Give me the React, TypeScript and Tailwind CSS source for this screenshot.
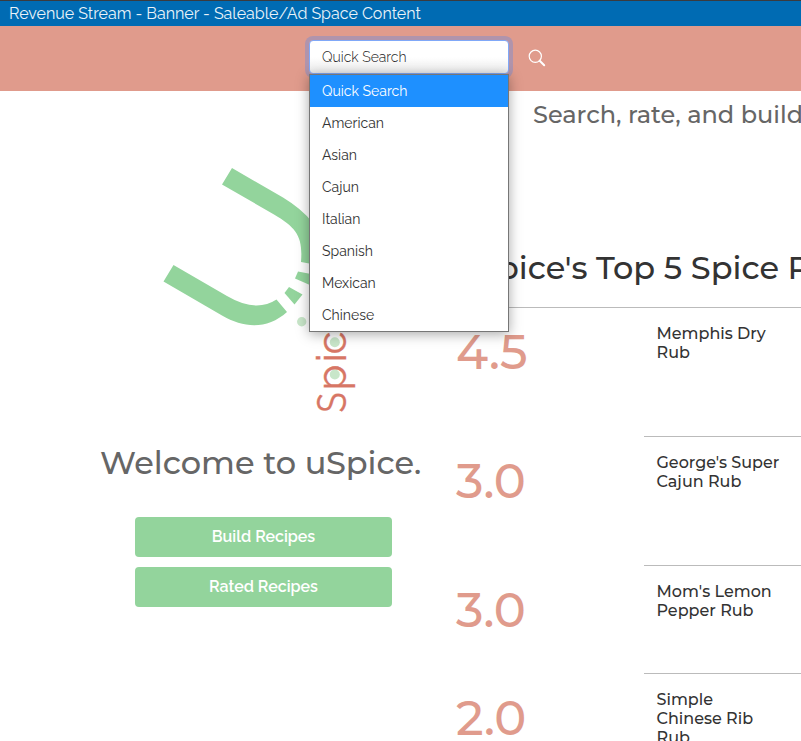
const cuisines = ["Quick Search", "American", "Asian", "Cajun", "Italian", "Spanish", "Mexican", "Chinese"];

const heading = "font-['Montserrat','Inter',sans-serif] font-medium";

const rubs = [
  { score: "4.5", lines: ["Memphis Dry", "Rub"], height: "h-[129px]" },
  { score: "3.0", lines: ["George's Super", "Cajun Rub"], height: "h-[129px]" },
  { score: "3.0", lines: ["Mom's Lemon", "Pepper Rub"], height: "h-[108px]" },
  { score: "2.0", lines: ["Simple", "Chinese Rib", "Rub"], height: "h-[129px]" },
];

function Logo() {
  return (
    <svg className="ml-[160px] mt-[69px] block h-[260px] w-[200px] shrink-0" viewBox="160 160 200 260">
      <g fill="#93d49c">
        <path d="M232 168 L283 197.5 Q302 209 312 222 V264 L301 262 C303 237 297 228 274 214.5 L222 184.5Z" />
        <path d="M173.5 265 L227 296 Q256 313 276.5 299.5 L287 312 C268 329 245 329 222 315.500 L163.5 281.5Z" />
        <path d="M298 271.500 L311 274 V285.500 L295 278.500Z" />
        <path d="M289 287 L302.500 294.500 L294.500 304.500 L284.500 293Z" />
      </g>
      <g fill="#c8e6c9">
        <circle cx="301.7" cy="321.7" r="4.7" />
        <circle cx="334.8" cy="342.2" r="5" />
        <circle cx="334.8" cy="374.5" r="5" />
      </g>
      <g className="fill-[#d77665] stroke-[#d77665] font-['Raleway','Lato',sans-serif] text-[42px] font-normal" strokeWidth="0.3">
        <text transform="translate(345.500 412.500) rotate(-90) scale(0.78 1)">S</text>
        <text transform="translate(345.500 412.500) rotate(-90)" x="22 50 58">
          pic
        </text>
      </g>
    </svg>
  );
}

function QuickSearch() {
  return (
    <div className="relative h-[34px] w-[200px]">
      <div className="flex h-[34px] items-center rounded-[4px] border border-[#80a8f8] bg-linear-to-b from-white from-50% to-[#ececec] px-3 text-[14px] font-light text-[#222] shadow-[0_0_0_4px_#b094ac]">
        Quick Search
      </div>
      <ul className="absolute left-0 top-[34px] z-10 w-[200px] border border-[#767676] bg-white text-[14px] text-[#333] shadow-[0_2px_12px_rgba(0,0,0,0.35)]">
        {cuisines.map((name, i) => (
          <li
            key={name}
            className={
              i === 0
                ? "flex h-8 items-center bg-[#1e90ff] px-3 text-white"
                : "flex h-8 items-center px-3"
            }
          >
            {name}
          </li>
        ))}
      </ul>
    </div>
  );
}

export default function App() {
  return (
    <div className="flex h-[741px] w-[801px] flex-col overflow-hidden bg-white font-['Raleway','Lato',sans-serif]">
      <div className="flex h-[26px] shrink-0 items-center border-t border-[#3a3b3f] bg-[#006bb3] pl-[9px] text-[16px] text-[#eaf3f9]">
        <span>Revenue Stream - Banner - Saleable/Ad Space Content</span>
      </div>
      <header className="flex h-[65px] shrink-0 bg-[#e09b8c] pl-[309px] pt-[14px]">
        <QuickSearch />
        <svg className="ml-[19px] mt-[9px] size-[18px]" viewBox="0 0 18 18" fill="none" stroke="#fff">
          <circle cx="7.300" cy="7.300" r="6.100" strokeWidth="1.200" />
          <path d="M11.700 11.700 L16.200 16.200" strokeWidth="2" strokeLinecap="round" />
        </svg>
      </header>
      <main className="flex grow">
        <section className="flex w-[445px] shrink-0 flex-col">
          <Logo />
          <h1 className={`${heading} ml-[100px] mt-[23px] h-10 whitespace-nowrap text-[32px] leading-10 text-[#666]`}>
            Welcome to uSpice.
          </h1>
          <div className="ml-[135px] mt-[34px] flex w-[257px] flex-col gap-[10px]">
            <button className="h-10 rounded-[4px] bg-[#93d49c] text-[16px] font-semibold text-white">Build Recipes</button>
            <button className="h-10 rounded-[4px] bg-[#93d49c] text-[16px] font-semibold text-white">Rated Recipes</button>
          </div>
        </section>
        <section className="flex w-[500px] shrink-0 flex-col text-[#333]">
          <p className={`${heading} ml-[88px] mt-[8px] h-8 whitespace-nowrap text-[24px] leading-8 text-[#666]`}>
            Search, rate, and build your spice recipes
          </p>
          <h2 className={`${heading} ml-[11px] mt-[117px] h-10 whitespace-nowrap text-[32px] leading-10`}>
            uSpice's Top 5 Spice Picks
          </h2>
          {rubs.map((rub, i) => (
            <div key={i} className={`${rub.height} ${i === 0 ? "mt-[19px] border-t border-[#bbb]" : ""} flex shrink-0`}>
              <div className={`${heading} w-[199px] pl-[11px] ${i === 0 ? "pt-[16px]" : "pt-[17px]"} text-[48px] leading-[56px] text-[#e09b8c]`}>
                {rub.score}
              </div>
              <div className={`${heading} grow pl-[12.5px] ${i === 0 ? "pt-[16px]" : "border-t border-[#bbb] pt-[16px]"} text-[16px] leading-[19px]`}>
                {rub.lines.map((line) => (
                  <div key={line}>{line}</div>
                ))}
              </div>
            </div>
          ))}
        </section>
      </main>
    </div>
  );
}
